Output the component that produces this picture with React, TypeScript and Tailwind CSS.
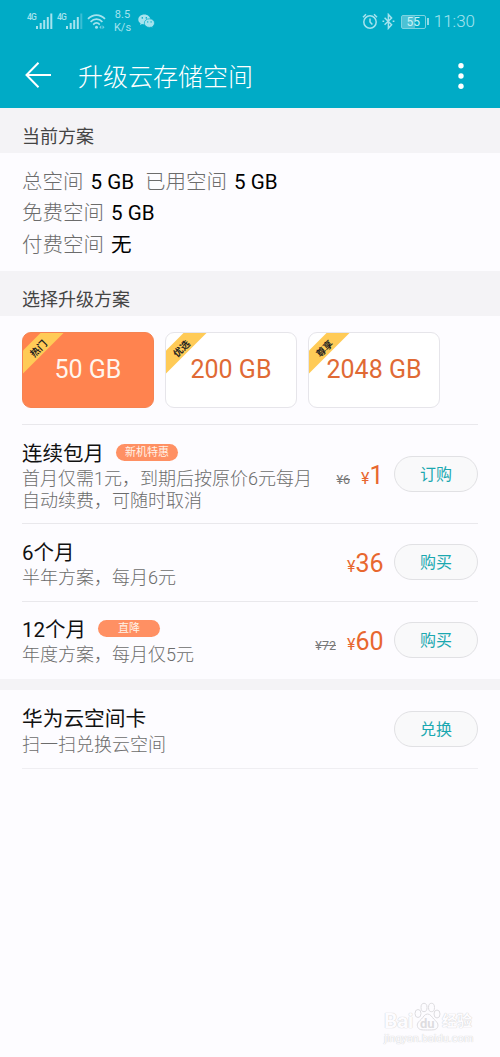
import clsx from 'clsx';

const tiers = [
  { size: '50 GB', tag: '热门', active: true },
  { size: '200 GB', tag: '优选', active: false },
  { size: '2048 GB', tag: '尊享', active: false },
];

const plans = [
  {
    name: '连续包月',
    badge: '新机特惠',
    desc: '首月仅需1元，到期后按原价6元每月自动续费，可随时取消',
    oldPrice: '¥6',
    price: '1',
    action: '订购',
    height: 'h-[99px]',
  },
  { name: '6个月', desc: '半年方案，每月6元', price: '36', action: '购买', height: 'h-[78px] pb-px' },
  {
    name: '12个月',
    badge: '直降',
    desc: '年度方案，每月仅5元',
    oldPrice: '¥72',
    price: '60',
    action: '购买',
    height: 'h-[78px] pb-[2px]',
  },
];

function Signal({ dimLast }: { dimLast?: boolean }) {
  return (
    <svg width="17" height="16" viewBox="0 0 17 16" fill="currentColor">
      <rect x="0" y="13" width="2" height="3" />
      <rect x="3.7" y="10" width="2" height="6" />
      <rect x="7.2" y="7" width="2" height="9" />
      <rect x="10.8" y="4" width="2" height="12" />
      <rect x="14.3" y="0.5" width="2" height="15.5" opacity={dimLast ? 0.35 : 1} />
    </svg>
  );
}

function StatusBar() {
  return (
    <div className="flex h-[43px] items-center justify-between pl-[27px] pr-[25px] text-[#a5e3ee]">
      <div className="-mt-px flex items-center">
        <span className="-mt-[8px] w-[9px] text-[8.5px] font-medium leading-none tracking-[-0.9px]">4G</span>
        <Signal />
        <span className="-mt-[8px] ml-[4px] w-[9px] text-[8.5px] font-medium leading-none tracking-[-0.9px]">4G</span>
        <Signal dimLast />
        <svg className="ml-[4px]" width="19" height="17" viewBox="0 0 19 17" fill="none" stroke="currentColor" strokeWidth="1.7">
          <path d="M1 5.8C6 .8 13 .8 18 5.8M3.6 8.8c3.5-3.5 8.3-3.5 11.8 0M6.2 11.6c2-2 4.6-2 6.6 0" />
          <circle cx="9.5" cy="14.2" r="1.5" fill="currentColor" stroke="none" />
          <path d="M12.3 14.2l2-2v4zM17.5 14.2l-2-2v4z" fill="currentColor" stroke="none" opacity=".7" />
        </svg>
        <div className="ml-[8px] flex w-[17px] flex-col items-center text-[11px] leading-[13px]">
          <span>8.5</span>
          <span>K/s</span>
        </div>
        <svg className="ml-[7px]" width="17" height="15" viewBox="0 0 17 15">
          <path
            fill="currentColor"
            d="M6.3.5C2.9.5.3 2.7.3 5.5c0 1.6.8 2.900 2.200 3.800L2 11l2-1c.8.2 1.500.3 2.300.3 3.400 0 6-2.200 6-4.900S9.700.5 6.300.5z"
          />
          <path
            fill="currentColor"
            stroke="#00abc6"
            strokeWidth=".7"
            d="M11.4 4.800c-2.900 0-5.100 1.900-5.100 4.300s2.200 4.300 5.100 4.300c.6 0 1.200-.1 1.800-.3l1.700.9-.4-1.500c1.200-.8 2-2 2-3.400 0-2.400-2.200-4.300-5.100-4.300z"
          />
          <g fill="#00abc6">
            <circle cx="4.3" cy="3.9" r=".8" />
            <circle cx="8.3" cy="3.9" r=".8" />
            <circle cx="9.7" cy="7.9" r=".7" />
            <circle cx="13.1" cy="7.9" r=".7" />
          </g>
        </svg>
      </div>
      <div className="flex items-center">
        <svg width="16" height="17" viewBox="0 0 16 17" fill="none" stroke="currentColor" strokeWidth="1.5">
          <circle cx="8" cy="9" r="6.2" />
          <path d="M8 5.5V9l2.4 2.6M1 4.2L4 1.3M15 4.2l-3-2.9" />
        </svg>
        <svg className="ml-[4px]" width="13" height="17" viewBox="0 0 13 17" fill="none" stroke="currentColor" strokeWidth="1.5">
          <path d="M2.6 4.8l7 7-3.2 3.5V1.5l3.2 3.5-7 6.8" />
          <path d="M.5 8.3h1.7M10.7 8.3h1.7" />
        </svg>
        <div className="ml-[6px] flex h-[14px] w-[25px] items-center justify-center rounded-[2px] border border-[#7dd3e1] bg-linear-to-r from-[#4cc2d5] from-55% to-transparent to-55% text-[12px] leading-none text-[#c8f2f6]">
          55
        </div>
        <div className="ml-px h-[7px] w-[2px] bg-[#8fdbe7]" />
        <span className="ml-[5px] text-[17px] font-light leading-none">11:30</span>
      </div>
    </div>
  );
}

function Header() {
  return (
    <header className="h-[108px] bg-[#00abc6]">
      <StatusBar />
      <div className="flex h-[65px] items-center pl-[25px] pr-[36px] text-white">
        <svg className="-mt-px" width="27" height="26" viewBox="0 0 27 26" fill="none" stroke="currentColor" strokeWidth="2">
          <path d="M13.5.8L1.5 13l12 12.2M1.5 13H26" />
        </svg>
        <h1 className="ml-[26px] flex-1 pt-[4px] text-[25px] font-light leading-[30px]">升级云存储空间</h1>
        <svg width="6" height="26" viewBox="0 0 6 26" fill="currentColor">
          <circle cx="3" cy="2.8" r="2.7" />
          <circle cx="3" cy="13" r="2.7" />
          <circle cx="3" cy="23.2" r="2.7" />
        </svg>
      </div>
    </header>
  );
}

function SectionTitle({ children }: { children: string }) {
  return (
    <h2 className="flex h-[45px] items-end bg-[#f4f3f6] px-[22px] pb-[3px] text-[18px] font-normal leading-[26px] text-[#444]">
      {children}
    </h2>
  );
}

function Stat({ label, value }: { label: string; value: string }) {
  return (
    <span className="mr-[11px]">
      {label} <span className="ml-[2px] text-[20.6px] font-normal text-black">{value}</span>
    </span>
  );
}

function TierCard({ size, tag, active }: (typeof tiers)[number]) {
  return (
    <button
      type="button"
      className={clsx(
        'relative flex h-[76px] w-[132px] items-center justify-center overflow-hidden rounded-[9px] border text-[25px] leading-[20px]',
        active ? 'border-[#f58352] bg-[#ff834f] text-[#fff6ee]' : 'border-[#e6e5ea] bg-white text-[#e06a35]',
      )}
    >
      <svg className="absolute left-0 top-0" width="41" height="41" viewBox="0 0 41 41">
        <path d="M17.5 0H40.5L0 40.5V17.5z" fill="#ffcb57" />
      </svg>
      <span className="absolute left-[6px] top-[11px] -rotate-45 text-[9.5px] font-bold leading-[9px] text-[#222]">
        {tag}
      </span>
      <span>{size}</span>
    </button>
  );
}

function PillButton({ children }: { children: string }) {
  return (
    <button
      type="button"
      className="flex h-[36px] w-[84px] shrink-0 items-center justify-center rounded-full border border-[#e1e1e4] bg-[#f9f9fa] pt-[2px] text-[16px] text-[#1ba8b0]"
    >
      {children}
    </button>
  );
}

function PlanRow({ name, badge, desc, oldPrice, price, action, height }: (typeof plans)[number]) {
  return (
    <li className={clsx('flex items-center border-t border-[#e9e8ec]', height)}>
      <div className="w-[292px] shrink-0 pt-[4px]">
        <div className="flex items-center">
          <h3 className="text-[20.5px] font-normal leading-[27px] text-[#111]">{name}</h3>
          {badge && (
            <span className="-mt-[4px] ml-[12px] flex h-[17px] w-[62px] items-center justify-center rounded-full bg-[#ff9063] text-[11px] leading-none text-[#fff3e8]">
              {badge}
            </span>
          )}
        </div>
        <p className="text-[18px] font-light leading-[22px] text-[#6c6c6c]">{desc}</p>
      </div>
      <div className="flex flex-1 items-baseline justify-end pr-[10.5px] pt-[4px]">
        {oldPrice && <s className="mr-[11px] text-[12.5px] text-[#777]">{oldPrice}</s>}
        <span className="text-[16px] text-[#e8672f]">¥</span>
        <span className="text-[25px] leading-[30px] text-[#e8672f]">{price}</span>
      </div>
      <PillButton>{action}</PillButton>
    </li>
  );
}

function Watermark() {
  return (
    <div className="ml-[384px] mt-auto flex h-[55px] w-[92px] flex-col text-[#fdfcff] [text-shadow:0_0_1px_#ccc,0_0_1px_#ddd]">
      <div className="flex h-[29px] items-end">
        <span className="w-[30px] text-[21px] font-bold leading-[20px] tracking-[-0.5px]">Bai</span>
        <svg width="27" height="29" viewBox="0 0 27 29" fill="#fdfcff" stroke="#dddce0" strokeWidth="1">
          <ellipse cx="4" cy="11.5" rx="3" ry="4" />
          <ellipse cx="10" cy="5.5" rx="3" ry="4.2" />
          <ellipse cx="17.5" cy="5.5" rx="3" ry="4.2" />
          <ellipse cx="23" cy="12" rx="3" ry="4" />
          <path d="M13.5 12c-3 0-4 3-6 5s-5 4-4 7.500 4 3.500 10 3.500 9.500 0 10.300-3.500-2-5.500-4-7.500-3.300-5-6.300-5z" />
          <text
            className="[text-shadow:none]"
            x="6"
            y="25.5"
            fontSize="13"
            fontWeight="700"
            fill="#dddce0"
            stroke="none"
          >
            du
          </text>
        </svg>
        <span className="ml-px text-[15px] font-bold leading-[20px]">经验</span>
      </div>
      <span className="text-[11px] leading-[15px]">jingyan.baidu.com</span>
    </div>
  );
}

export default function App() {
  return (
    <div className="flex h-[1057px] w-[500px] flex-col overflow-hidden bg-[#fdfcff] font-[Roboto,'Noto_Sans_CJK_SC',sans-serif]">
      <Header />
      <SectionTitle>当前方案</SectionTitle>
      <div className="h-[118px] px-[22px] pt-[14px] text-[20.5px] font-light leading-[31.3px] text-[#6c6c6c]">
        <p>
          <Stat label="总空间" value="5 GB" />
          <Stat label="已用空间" value="5 GB" />
        </p>
        <p>
          <Stat label="免费空间" value="5 GB" />
        </p>
        <p>
          <Stat label="付费空间" value="无" />
        </p>
      </div>
      <SectionTitle>选择升级方案</SectionTitle>
      <div className="flex gap-[11px] px-[22px] pb-[16px] pt-[16px]">
        {tiers.map((tier) => (
          <TierCard key={tier.size} {...tier} />
        ))}
      </div>
      <ul className="px-[22px]">
        {plans.map((plan) => (
          <PlanRow key={plan.name} {...plan} />
        ))}
      </ul>
      <div className="h-[11px] bg-[#f4f3f6]" />
      <div className="mx-[22px] flex h-[79px] items-center justify-between border-b border-[#efeef2]">
        <div className="pt-[3px]">
          <h3 className="text-[20.7px] font-normal leading-[28px] text-[#111]">华为云空间卡</h3>
          <p className="text-[18px] font-light leading-[24px] text-[#6c6c6c]">扫一扫兑换云空间</p>
        </div>
        <PillButton>兑换</PillButton>
      </div>
      <Watermark />
    </div>
  );
}
